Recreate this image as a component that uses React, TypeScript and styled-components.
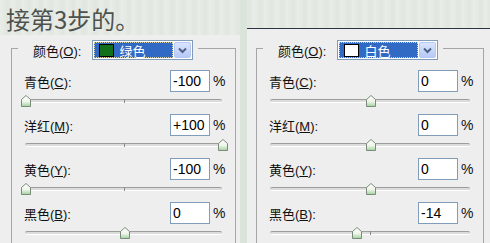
import React from 'react';
import styled, { createGlobalStyle } from 'styled-components';

type Channel = {
  name: string;
  key: string;
  value: number;
  text: string;
};

type PanelData = {
  colour: string;
  swatch: string;
  channels: Channel[];
};

const GlobalStyle = createGlobalStyle`
  html, body {
    margin: 0;
    padding: 0;
    overflow: hidden;
  }

  body {
    font-family: "Liberation Sans", "Noto Sans CJK SC", sans-serif;
  }
`;

const Screen = styled.div`
  display: grid;
  grid-template-columns: 240px 7px 1fr;
  width: 490px;
  height: 243px;
  overflow: hidden;
  background-color: #e5eae4;
  background-image: repeating-linear-gradient(
    90deg,
    rgba(255, 255, 255, 0.18) 0px,
    rgba(255, 255, 255, 0) 4px,
    rgba(190, 200, 190, 0.12) 7px,
    rgba(255, 255, 255, 0) 11px
  );
`;

const Column = styled.div<{ $top?: number }>`
  display: flex;
  flex-direction: column;
  min-height: 0;
  padding-top: ${({ $top }) => $top ?? 0}px;
`;

const Title = styled.div`
  box-sizing: border-box;
  height: 35px;
  padding: 4px 0 0 6px;
  font-family: "Noto Sans CJK SC", sans-serif;
  font-size: 24px;
  line-height: 30px;
  color: #4e524e;
  white-space: nowrap;
`;

const Gutter = styled.div`
  background: #dbe4da;
`;

const Panel = styled.div<{ $ruled?: boolean }>`
  flex: 1;
  min-height: 0;
  overflow: hidden;
  background: #eeeeee;
  border-top: ${({ $ruled }) => ($ruled ? '1px solid #2e3444' : 'none')};
  padding: ${({ $ruled }) => ($ruled ? '7px 6px 0 9px' : '1px 4px 0 11px')};
`;

const Group = styled.fieldset`
  box-sizing: border-box;
  min-width: 0;
  height: 100%;
  margin: 0;
  padding: 10px 12px 0 12px;
  border: 1px solid #a6a6a6;
  border-bottom: none;
`;

const Legend = styled.legend`
  display: flex;
  align-items: center;
  gap: 11px;
  margin-left: -6px;
  padding: 4px 5px 0 15px;
  font-size: 13px;
  color: #111;
`;

const Combo = styled.div`
  box-sizing: border-box;
  display: flex;
  gap: 1px;
  width: 101px;
  height: 20px;
  padding: 1px;
  border: 1px solid #7f9db9;
  background: #ffffff;
`;

const Selection = styled.div`
  box-sizing: border-box;
  flex: 1;
  display: flex;
  align-items: center;
  gap: 5px;
  padding-left: 4px;
  background: #316ac5;
  border: 1px dotted #d8d2a8;
  color: #ffffff;
  font-size: 13px;
`;

const Swatch = styled.span<{ $fill: string }>`
  box-sizing: border-box;
  width: 15px;
  height: 13px;
  border: 1px solid #000;
  background: ${({ $fill }) => $fill};
`;

const ArrowButton = styled.div`
  box-sizing: border-box;
  display: flex;
  align-items: center;
  justify-content: center;
  width: 17px;
  border: 1px solid #b7c9f2;
  border-radius: 2px;
  background: linear-gradient(#d9e4fd, #b6c9f6);
`;

const Row = styled.div`
  display: flex;
  flex-direction: column;
`;

const RowHead = styled.div`
  display: grid;
  grid-template-columns: 1fr 40px 13px;
  align-items: center;
  height: 22px;
`;

const Label = styled.span`
  font-size: 13px;
  color: #111;
  white-space: nowrap;
`;

const ValueBox = styled.input`
  box-sizing: border-box;
  width: 40px;
  height: 22px;
  margin: 0;
  padding: 0 0 0 2px;
  border: 1px solid #7f9db9;
  background: #ffffff;
  font-family: "Liberation Sans", sans-serif;
  font-size: 14px;
  color: #000;
  outline: none;
`;

const Percent = styled.span`
  padding-left: 3px;
  font-size: 14px;
  color: #111;
`;

const SliderBox = styled.div`
  position: relative;
  height: 22px;
  margin: 0 1px 0 1px;
`;

const Track = styled.div`
  position: absolute;
  top: 7px;
  left: 0;
  right: 0;
  height: 2px;
  border-top: 1px solid #9d9d9d;
  border-bottom: 1px solid #ffffff;
  border-radius: 2px;
  background: #dcdcdc;
`;

const Tick = styled.div`
  position: absolute;
  top: 7px;
  left: 50%;
  width: 1px;
  height: 4px;
  background: #8a8a8a;
`;

const Thumb = styled.svg`
  position: absolute;
  top: 3px;
  margin-left: -5px;
`;

const ChevronDown = () => (
  <svg width="9" height="7" viewBox="0 0 9 7">
    <path d="M1 1.5 L4.5 5 L8 1.5" fill="none" stroke="#4d6185" strokeWidth="2" />
  </svg>
);

const Slider = ({ value }: { value: number }) => (
  <SliderBox>
    <Track />
    <Tick />
    <Thumb
      width="10"
      height="12"
      viewBox="0 0 10 12"
      style={{ left: `calc(${(value + 100) / 2}% + 1px)` }}
    >
      <defs>
        <linearGradient id="thumbFill" x1="0" y1="0" x2="0" y2="1">
          <stop offset="0" stopColor="#ffffff" />
          <stop offset="0.55" stopColor="#eef5ea" />
          <stop offset="1" stopColor="#9fd39a" />
        </linearGradient>
      </defs>
      <path d="M0.5 4.5 L5 0.5 L9.5 4.5 L9.5 11.5 L0.5 11.5 Z" fill="url(#thumbFill)" stroke="#7c8a7c" />
    </Thumb>
  </SliderBox>
);

const ChannelRow = ({ channel }: { channel: Channel }) => (
  <Row>
    <RowHead>
      <Label>
        {channel.name}(<u>{channel.key}</u>):
      </Label>
      <ValueBox readOnly value={channel.text} />
      <Percent>%</Percent>
    </RowHead>
    <Slider value={channel.value} />
  </Row>
);

const ColourGroup = ({ data }: { data: PanelData }) => (
  <Group>
    <Legend>
      <span>
        颜色(<u>O</u>):
      </span>
      <Combo>
        <Selection>
          <Swatch $fill={data.swatch} />
          <span>{data.colour}</span>
        </Selection>
        <ArrowButton>
          <ChevronDown />
        </ArrowButton>
      </Combo>
    </Legend>
    {data.channels.map((channel) => (
      <ChannelRow key={channel.key} channel={channel} />
    ))}
  </Group>
);

const greens: PanelData = {
  colour: '绿色',
  swatch: '#13701a',
  channels: [
    { name: '青色', key: 'C', value: -100, text: '-100' },
    { name: '洋红', key: 'M', value: 100, text: '+100' },
    { name: '黄色', key: 'Y', value: -100, text: '-100' },
    { name: '黑色', key: 'B', value: 0, text: '0' },
  ],
};

const whites: PanelData = {
  colour: '白色',
  swatch: '#ffffff',
  channels: [
    { name: '青色', key: 'C', value: 0, text: '0' },
    { name: '洋红', key: 'M', value: 0, text: '0' },
    { name: '黄色', key: 'Y', value: 0, text: '0' },
    { name: '黑色', key: 'B', value: -14, text: '-14' },
  ],
};

export default function App() {
  return (
    <>
      <GlobalStyle />
      <Screen>
        <Column>
          <Title>接第3步的。</Title>
          <Panel>
            <ColourGroup data={greens} />
          </Panel>
        </Column>
        <Gutter />
        <Column $top={28}>
          <Panel $ruled>
            <ColourGroup data={whites} />
          </Panel>
        </Column>
      </Screen>
    </>
  );
}
